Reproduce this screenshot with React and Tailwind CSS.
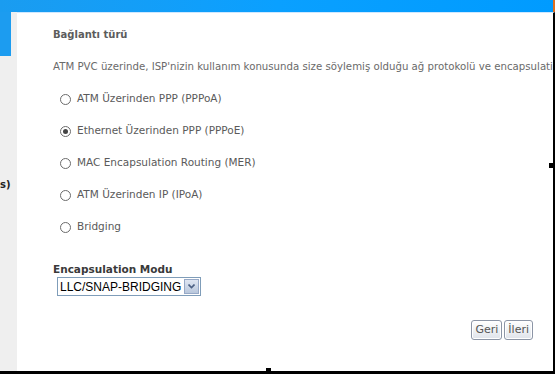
import React from "react";

function Radio({ checked }) {
  return (
    <span className="relative inline-flex items-center justify-center w-[11px] h-[11px] rounded-full border border-[#6b6b6b] bg-white mr-[6px] shrink-0">
      {checked && <span className="w-[5px] h-[5px] rounded-full bg-[#444]" />}
    </span>
  );
}

function Option({ label, checked }) {
  return (
    <div className="flex items-center h-[16px] text-[#5a5a5a]">
      <Radio checked={checked} />
      <span>{label}</span>
    </div>
  );
}

export default function App() {
  return (
    <div
      className="relative w-[555px] h-[374px] overflow-hidden bg-white flex flex-col"
      style={{ fontFamily: '"DejaVu Sans", Tahoma, sans-serif' }}
    >
      <div className="h-[12px] shrink-0 flex bg-gradient-to-r from-[#1a9cf0] via-[#0aa0ff] to-[#009bff]">
        <div className="flex-1" />
        <div className="w-[2px] bg-[#e07020]" />
      </div>
      <div className="flex flex-1 min-h-0 border-b-[3px] border-black">
        <div className="w-[17px] shrink-0 bg-[#efefef] flex flex-col">
          <div className="h-[44px] w-[11px] bg-[#1c9cf0]" />
          <div className="mt-[124px] text-[10px] font-bold text-[#222] leading-none">s)</div>
        </div>
        <div className="flex-1 min-w-0 overflow-hidden relative border-t border-[#cfe8ff] border-r-2 border-r-black pl-[36px] pt-[15px] text-[10.5px]">
          <div className="font-bold text-[#5c5c5c] leading-[14px] text-[10px]">Bağlantı türü</div>
          <div className="mt-[18px] whitespace-nowrap text-[#6a6a6a] leading-[14px] text-[10.2px]">
            ATM PVC üzerinde, ISP'nizin kullanım konusunda size söylemiş olduğu ağ protokolü ve encapsulation
          </div>
          <div className="mt-[17px] ml-[7px] flex flex-col gap-[16px]">
            <Option label="ATM Üzerinden PPP (PPPoA)" />
            <Option label="Ethernet Üzerinden PPP (PPPoE)" checked />
            <Option label="MAC Encapsulation Routing (MER)" />
            <Option label="ATM Üzerinden IP (IPoA)" />
            <Option label="Bridging" />
          </div>
          <div className="mt-[27px] font-bold text-[#3a3a3a] text-[10.5px] leading-[14px]">Encapsulation Modu</div>
          <div className="mt-[1px] ml-[4px] inline-flex items-center h-[19px] border border-[#7f9db9] bg-white pl-[2px] pr-[1px]">
            <span
              className="text-[12px] text-black leading-none pr-[3px]"
              style={{ fontFamily: '"Liberation Sans", Arial, sans-serif' }}
            >
              LLC/SNAP-BRIDGING
            </span>
            <span className="w-[15px] h-[15px] bg-gradient-to-b from-[#dfe6f2] to-[#b9c7dc] border border-[#97a9c7] flex items-center justify-center">
              <svg width="7" height="5" viewBox="0 0 7 5">
                <path d="M0.5 0.5 L3.5 3.5 L6.5 0.5" stroke="#4d6185" strokeWidth="1.6" fill="none" />
              </svg>
            </span>
          </div>
          <div className="absolute right-[20px] top-[307px] flex gap-[2px]">
            <div className="h-[20px] px-[3px] flex items-center text-[11px] text-[#555] rounded-[3px] border border-[#8c95a6] bg-gradient-to-b from-white to-[#dfe3ea] shadow-[inset_0_0_0_1px_#fff]">Geri</div>
            <div className="h-[20px] px-[3px] flex items-center text-[11px] text-[#555] rounded-[3px] border border-[#8c95a6] bg-gradient-to-b from-white to-[#dfe3ea] shadow-[inset_0_0_0_1px_#fff]">İleri</div>
          </div>
        </div>
      </div>
      <div className="absolute left-[549px] top-[163px] w-[6px] h-[5px] bg-black" />
      <div className="absolute left-[266px] top-[368px] w-[5px] h-[6px] bg-black" />
    </div>
  );
}
